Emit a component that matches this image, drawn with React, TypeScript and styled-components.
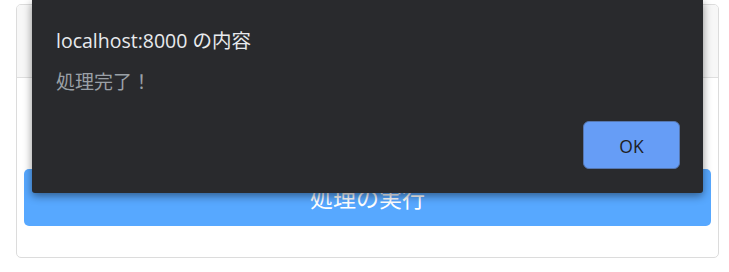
import styled, { createGlobalStyle } from 'styled-components';

const GlobalStyle = createGlobalStyle`
    html, body {
        margin: 0;
        padding: 0;
        background: #ffffff;
        font-family: 'Noto Sans', 'Noto Sans CJK JP', sans-serif;
    }
`

const SPage = styled.main`
    position: relative;
    height: 272px;
    padding: 4px 10px 0 16px;
    box-sizing: border-box;
    overflow: hidden;
`

const SCard = styled.section`
    display: flex;
    flex-direction: column;
    height: 254px;
    border: 1px solid #dcdcdc;
    border-radius: 5px;
    box-sizing: border-box;
    overflow: hidden;
`

const SCardHeader = styled.header`
    height: 72px;
    background: #f7f7f7;
    border-bottom: 1px solid #dfdfdf;
`

const SCardBody = styled.div`
    flex: 1;
    display: flex;
    flex-direction: column;
    justify-content: flex-end;
    padding: 0 7px 31px;
`

const SRunButton = styled.button`
    height: 57px;
    border: none;
    border-radius: 5px;
    background: #57a8ff;
    color: #ffffff;
    font-family: 'Noto Sans CJK JP', sans-serif;
    font-size: 23px;
    padding-top: 0;
`

const SDialog = styled.div`
    position: absolute;
    left: 32px;
    top: 0;
    width: 671px;
    height: 193px;
    box-sizing: border-box;
    padding: 24px 23px 24px 24px;
    background: #292a2d;
    border-radius: 0 0 3px 3px;
    box-shadow: 0 3px 8px rgba(0, 0, 0, 0.45);
    display: flex;
    flex-direction: column;
`

const STitle = styled.h2`
    margin: 0;
    font-family: 'Open Sans', 'Noto Sans CJK JP', sans-serif;
    font-weight: 400;
    font-size: 19.5px;
    line-height: 34px;
    color: #e8eaed;
`

const SMessage = styled.p`
    margin: 12px 0 0;
    font-family: 'Noto Sans CJK JP', sans-serif;
    font-size: 19px;
    line-height: 22px;
    color: #9aa0a6;
`

const SActions = styled.div`
    margin-top: auto;
    display: flex;
    justify-content: flex-end;
`

const SOkButton = styled.button`
    width: 97px;
    height: 48px;
    border: 1px solid #5677b0;
    border-radius: 6px;
    background: #669df6;
    color: #202124;
    font-family: 'Open Sans', sans-serif;
    font-size: 17.5px;
    padding-top: 2px;
`

export default function App() {
    return (
        <>
            <GlobalStyle />
            <SPage>
                <SCard>
                    <SCardHeader />
                    <SCardBody>
                        <SRunButton>処理の実行</SRunButton>
                    </SCardBody>
                </SCard>
                <SDialog role="dialog">
                    <STitle>localhost:8000 の内容</STitle>
                    <SMessage>処理完了！</SMessage>
                    <SActions>
                        <SOkButton>OK</SOkButton>
                    </SActions>
                </SDialog>
            </SPage>
        </>
    )
}
